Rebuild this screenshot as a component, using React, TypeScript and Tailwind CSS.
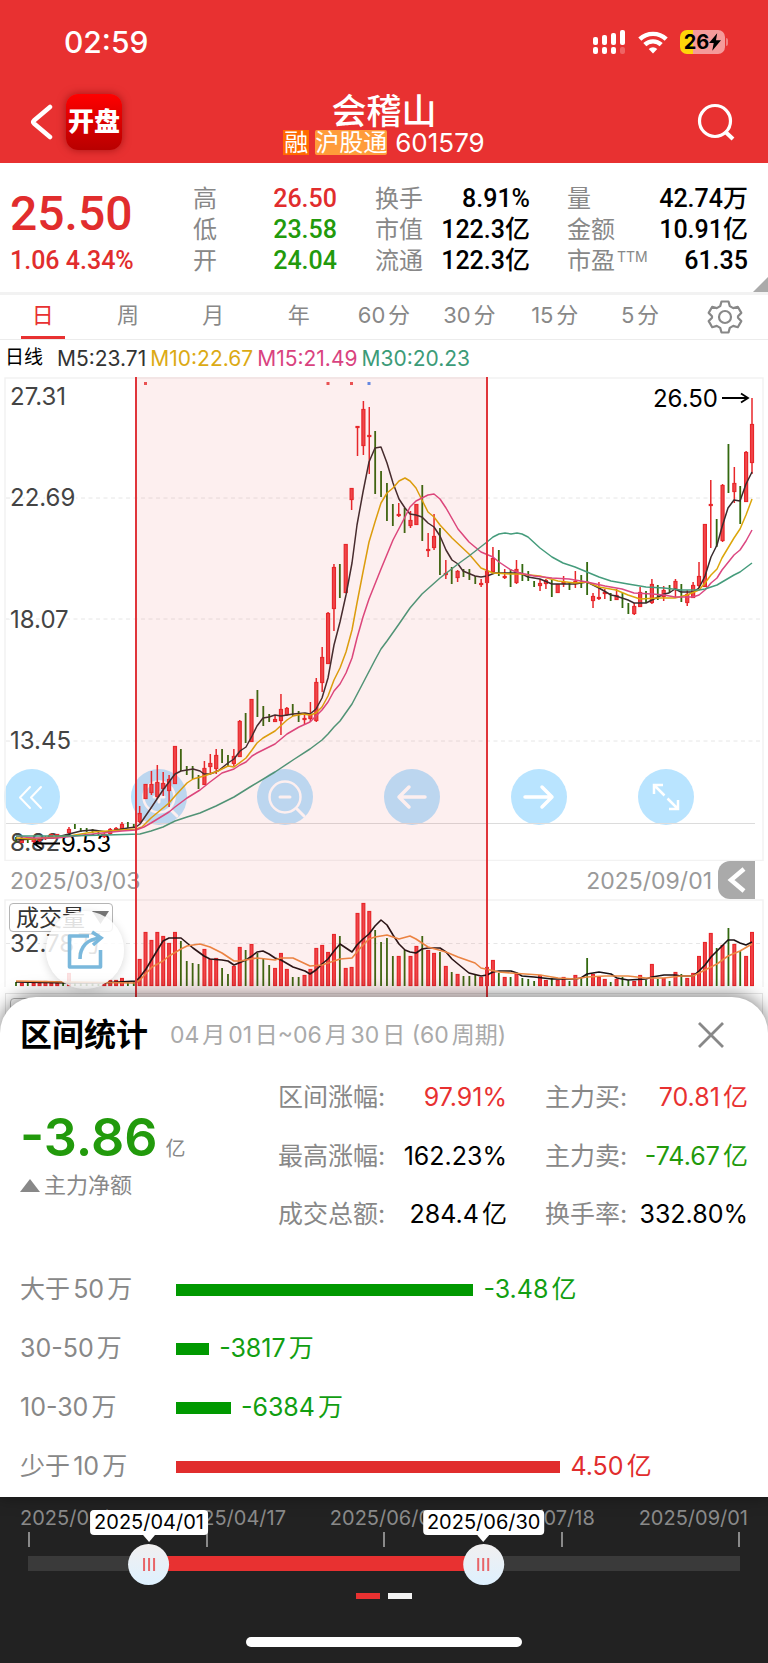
import type React from "react"
import { useState } from "react"

// high, low, volume, then body top and bottom for rising bars
type Bar = [number, number, number, number?, number?]

const bars: Bar[] = [
  [837, 842, 4], [840, 843, 3, 840, 843], [840, 843, 3], [838, 843, 3, 839, 842], [838, 842, 3, 839, 841],
  [836, 840, 5, 837, 839], [834, 837, 3, 834, 837], [834, 837, 3, 834, 836], [835, 838, 3], [827, 834, 13, 829, 833],
  [824, 829, 4], [828, 832, 3], [828, 832, 3], [829, 833, 3], [831, 835, 2],
  [833, 838, 3, 834, 837], [828, 835, 6, 829, 834], [827, 830, 6, 828, 830], [822, 830, 8, 824, 829], [822, 828, 4],
  [824, 828, 5], [806, 823, 27, 813, 822], [784, 799, 54, 784, 799], [771, 795, 46, 784, 793], [765, 799, 54, 782, 797],
  [772, 796, 50, 783, 789], [775, 807, 43, 779, 791], [746, 784, 54, 746, 784], [749, 771, 45], [766, 775, 25],
  [766, 779, 23], [775, 789, 22], [761, 785, 37, 768, 785], [754, 773, 27, 763, 767], [749, 774, 28, 755, 769],
  [749, 763, 18], [755, 766, 12], [749, 766, 20, 756, 764], [720, 757, 39, 721, 757], [713, 743, 36],
  [699, 742, 42, 699, 742], [690, 717, 33], [706, 726, 28], [714, 722, 21], [716, 722, 18, 719, 722],
  [694, 735, 33, 709, 721], [707, 716, 17, 708, 715], [704, 716, 9], [711, 722, 9], [715, 724, 11, 718, 720],
  [702, 722, 17, 714, 719], [678, 722, 38, 682, 721], [647, 692, 41, 657, 683], [612, 664, 34, 613, 664], [564, 631, 52, 567, 609],
  [564, 598, 50], [544, 593, 18, 544, 593], [488, 510, 19, 488, 500], [426, 456, 73, 426, 428], [401, 455, 83, 409, 446],
  [407, 474, 75, 435, 437], [431, 494, 56], [471, 497, 44], [483, 521, 48], [504, 526, 30],
  [503, 517, 30, 514, 516], [508, 533, 36], [511, 528, 30, 520, 526], [504, 525, 40, 504, 525], [485, 541, 50],
  [533, 557, 36, 549, 551], [514, 550, 33, 536, 548], [528, 575, 34], [560, 579, 20, 573, 575], [567, 584, 14],
  [570, 582, 12, 571, 578], [569, 577, 10], [569, 580, 10], [576, 584, 11], [579, 587, 9, 583, 585],
  [571, 583, 19, 571, 583], [547, 573, 26, 558, 572], [550, 576, 13], [569, 579, 9, 576, 578], [569, 587, 9],
  [560, 584, 12, 569, 583], [564, 581, 8], [571, 581, 7], [581, 587, 5], [579, 591, 11, 583, 586],
  [579, 589, 6, 580, 584], [580, 597, 8], [584, 593, 6, 584, 593], [576, 587, 9, 582, 584], [582, 590, 5],
  [571, 588, 11, 581, 584], [575, 588, 9], [562, 595, 28], [593, 608, 12, 596, 601], [582, 600, 9, 597, 599],
  [589, 599, 7, 592, 594], [593, 601, 4], [589, 600, 7, 595, 600], [593, 608, 9], [603, 614, 6],
  [603, 615, 5, 606, 614], [587, 607, 11, 592, 607], [591, 603, 6], [579, 604, 22, 584, 603], [585, 600, 7],
  [586, 601, 8, 590, 597], [585, 593, 5], [579, 598, 14, 581, 590], [584, 602, 12], [590, 606, 8, 594, 603],
  [582, 598, 13, 585, 598], [562, 588, 30, 576, 586], [524, 587, 44, 524, 587], [480, 548, 53, 504, 506], [519, 547, 38],
  [484, 542, 41, 485, 541], [444, 493, 58], [467, 503, 42, 483, 492], [486, 524, 35], [451, 502, 30, 452, 502],
  [398, 474, 54, 424, 463],
]

const m5 =
  "16,840 33,839 53,838 69,834 81,831 93,830 107,832 116,830 128,828 136,827 140,824 151,808 163,790 175,774 181,771 193,769 200,771 204,774 210,774 218,771 228,763 234,759 240,751 246,747 252,736 257,726 263,718 269,717 275,715 281,716 293,714 305,713 310,714 316,709 322,698 328,678 334,645 340,622 346,595 352,563 357,525 363,492 369,462 375,448 381,447 387,463 393,483 399,499 405,508 410,514 416,515 422,517 428,523 434,527 440,536 446,550 452,560 458,564 463,571 475,576 481,577 487,576 495,573 510,573 520,573 528,577 540,579 552,584 558,584 575,584 587,582 599,588 611,595 616,596 628,600 634,603 646,603 658,597 664,594 669,593 675,589 681,592 693,592 699,588 705,576 711,557 717,545 722,527 728,508 734,500 740,501 746,484 752,472"
const m10 =
  "16,838 33,839 69,836 93,832 122,830 136,829 142,827 151,818 169,803 175,796 187,783 193,779 204,776 218,771 228,766 234,767 246,758 252,750 257,743 263,738 275,731 287,720 293,716 303,714 310,715 316,713 322,707 328,696 334,680 340,668 346,652 352,630 357,603 363,572 369,542 375,522 381,503 387,493 393,488 399,481 405,478 410,481 416,488 422,500 428,512 434,517 440,525 452,538 469,554 481,568 493,573 510,574 520,574 540,576 558,581 575,583 587,582 599,587 616,590 628,595 640,599 658,598 675,598 687,595 699,590 705,583 711,575 717,569 722,558 734,538 740,529 746,515 752,499"
const m15 =
  "16,836 33,838 57,838 93,834 122,831 136,830 144,827 151,823 169,812 175,807 187,798 200,790 210,782 222,773 234,769 240,765 246,762 252,756 257,753 263,750 275,744 287,734 299,727 310,722 316,716 322,710 328,702 334,691 340,684 346,673 352,658 357,638 363,617 369,599 381,569 393,540 405,517 410,507 416,501 428,495 434,494 440,499 446,508 458,529 469,542 481,552 493,557 499,562 511,570 520,573 534,576 552,578 569,579 587,582 605,586 622,589 634,593 652,594 664,595 675,597 693,597 699,595 705,590 711,583 717,578 722,570 734,555 740,550 746,541 752,530"
const m30 =
  "16,836 67,836 107,835 140,834 151,831 163,827 169,824 175,821 187,817 200,813 216,806 234,797 250,787 275,772 293,760 310,749 322,740 328,734 334,727 340,721 352,704 363,683 375,660 381,649 387,641 399,624 410,608 422,594 440,578 458,564 469,556 487,542 493,537 499,534 505,533 511,534 517,533 522,534 528,537 540,548 552,557 563,563 575,567 587,572 599,577 611,581 628,584 646,587 664,588 681,590 699,590 705,589 717,585 734,575 740,572 752,563"
const vol5 =
  "16,982 69,983 100,983 136,981 140,977 146,969 152,959 163,941 169,938 181,938 187,943 193,948 204,956 210,959 222,960 228,961 234,965 246,960 252,956 257,952 263,951 269,954 275,958 281,960 293,967 305,971 310,974 316,970 322,964 328,959 334,951 340,944 346,948 352,952 357,945 363,939 369,934 375,926 381,920 387,925 393,935 399,944 405,950 410,952 416,953 422,949 428,948 440,948 446,952 452,959 458,964 469,973 481,976 487,975 493,972 499,971 511,971 517,973 522,976 534,977 552,979 575,979 581,978 587,974 599,972 611,974 617,978 628,980 646,979 652,977 664,975 675,975 681,976 693,976 699,971 705,965 711,957 717,951 722,946 728,940 734,940 740,943 746,945 752,942"
const vol10 =
  "16,981 69,982 136,983 140,980 152,967 163,961 169,956 181,949 187,946 193,945 200,944 210,947 222,953 234,961 240,961 257,958 275,960 281,958 293,958 310,966 322,965 340,959 352,958 357,952 363,945 369,939 375,937 387,935 393,937 399,939 410,936 416,939 428,947 446,952 458,957 475,963 481,968 499,972 511,973 540,975 558,978 575,979 587,977 605,976 628,976 646,978 664,978 681,976 693,976 705,970 717,964 728,956 740,951 752,944"

const tabs = ["日", "周", "月", "年", "60分", "30分", "15分", "5分"]

const barX = (i: number) => 16 + i * 5.888

function StatusBar() {
  return (
    <div className="flex h-20 items-center justify-between pr-10 pl-16 pt-1">
      <span className="text-[30px] font-medium">02:59</span>
      <div className="flex items-center gap-3">
        <svg width="33" height="25" viewBox="0 0 33 25" fill="white">
          <rect x="0" y="7" width="5" height="8" rx="2" />
          <rect x="9" y="5" width="5" height="10" rx="2" />
          <rect x="18" y="3" width="5" height="12" rx="2" />
          <rect x="27" y="0" width="5" height="15" rx="2" />
          <rect x="0" y="17" width="5" height="7" rx="2" />
          <rect x="9" y="17" width="5" height="7" rx="2" />
          <rect x="18" y="17" width="5" height="7" rx="2" />
          <rect x="27" y="17" width="5" height="7" rx="2" opacity="0.25" />
        </svg>
        <svg width="30" height="23" viewBox="0 0 30 23" fill="none" stroke="white" strokeWidth="4.4">
          <path d="M1.8 8.2a19 19 0 0 1 26.4 0" />
          <path d="M6.8 13.6a12 12 0 0 1 16.4 0" />
          <path d="M15 22.5 10.7 18a6.5 6.5 0 0 1 8.6 0z" fill="white" stroke="none" />
        </svg>
        <div className="flex items-center gap-px">
          <div className="flex h-6 w-[45px] items-center justify-center rounded-[7px] bg-[linear-gradient(90deg,#ffd60a_28%,#f59a9a_28%)] text-black">
            <span className="text-[20px] font-bold">26</span>
            <svg width="12" height="18" viewBox="0 0 11 16">
              <path d="M7.5 0 0 9h4.3L3 16l8-9.6H6.4z" fill="black" />
            </svg>
          </div>
          <div className="h-2 w-0.5 rounded-r bg-[#f08080]" />
        </div>
      </div>
    </div>
  )
}

function NavBar() {
  return (
    <div className="grid h-[83px] grid-cols-[1fr_auto_1fr] items-center">
      <div className="flex items-center gap-3 pl-7">
        <button type="button" aria-label="返回">
          <svg width="26" height="36" viewBox="0 0 26 36" fill="none" stroke="white" strokeWidth="4.5" strokeLinecap="round" strokeLinejoin="round">
            <path d="M22 3 6 16.500q-1.500 1.500 0 3L22 33" />
          </svg>
        </button>
        <div className="flex size-14 items-center justify-center rounded-xl bg-linear-to-b from-[#ff0000] to-[#b80000] text-[26px] font-black shadow-[0_0_8px_rgba(120,0,0,0.6)]">
          开盘
        </div>
      </div>
      <div className="flex flex-col items-center pt-1">
        <h1 className="text-[35px] leading-[38px] font-medium">会稽山</h1>
        <div className="flex items-center gap-1.5 text-2xl leading-[25px]">
          <span className="bg-[#ff6a00] px-px">融</span>
          <span className="rounded-xs bg-[#ff9c3a]">沪股通</span>
          <span className="ml-0.5 text-[26px]">601579</span>
        </div>
      </div>
      <button type="button" aria-label="搜索" className="mr-8 justify-self-end">
        <svg width="40" height="38" viewBox="0 0 40 38" fill="none" stroke="white" strokeWidth="3.2">
          <circle cx="19" cy="18" r="15.500" />
          <path d="M29 28.500 37 36" strokeWidth="4" />
        </svg>
      </button>
    </div>
  )
}

function QuoteItem({ label, value, color = "text-black" }: { label: React.ReactNode; value: string; color?: string }) {
  return (
    <div className="flex h-[31px] items-center justify-between whitespace-nowrap">
      <dt className="text-2xl text-[#888]">{label}</dt>
      <dd className={`font-['Roboto','Noto_Sans_CJK_SC',sans-serif] text-[25px] font-medium ${color}`}>{value}</dd>
    </div>
  )
}

function Quote() {
  return (
    <section className="relative grid h-[129px] grid-cols-[183fr_154fr_38fr_155fr_37fr_181fr_20fr] pt-5 [text-autospace:no-autospace]">
      <div className="pl-2.5 font-['Roboto',sans-serif] font-medium text-[#e12d2d]">
        <div className="text-5xl leading-[62px]">25.50</div>
        <div className="text-[25px] leading-[31px] whitespace-nowrap">1.06 4.34%</div>
      </div>
      <dl className="col-start-2 pl-2.5">
        <QuoteItem label="高" value="26.50" color="text-[#e12d2d]" />
        <QuoteItem label="低" value="23.58" color="text-[#229a0c]" />
        <QuoteItem label="开" value="24.04" color="text-[#229a0c]" />
      </dl>
      <dl className="col-start-4">
        <QuoteItem label="换手" value="8.91%" />
        <QuoteItem label="市值" value="122.3亿" />
        <QuoteItem label="流通" value="122.3亿" />
      </dl>
      <dl className="col-start-6">
        <QuoteItem label="量" value="42.74万" />
        <QuoteItem label="金额" value="10.91亿" />
        <QuoteItem label={<>市盈<sup className="ml-0.5 text-sm">TTM</sup></>} value="61.35" />
      </dl>
      <svg className="absolute right-0 bottom-0" width="15" height="15">
        <path d="M15 0v15H0z" fill="#aaa" />
      </svg>
    </section>
  )
}

function PeriodTabs() {
  const [active, setActive] = useState("日")
  return (
    <nav className="grid h-12 grid-cols-9 border-t-[3px] border-b border-t-[#f2f2f2] border-b-[#ececec] text-[22px]">
      {tabs.map((t) => (
        <button
          type="button"
          key={t}
          onClick={() => setActive(t)}
          className={`flex flex-col items-center justify-between pt-1 ${t === active ? "text-[#e83131]" : "text-[#888]"}`}
        >
          <span className="leading-8">{t}</span>
          <span className={`h-[3px] w-11 ${t === active ? "bg-[#e83131]" : ""}`} />
        </button>
      ))}
      <button type="button" aria-label="设置" className="flex items-center justify-center">
        <svg width="36" height="36" viewBox="0 0 36 36" fill="none" stroke="#888" strokeWidth="2.2" strokeLinejoin="round">
          <path d="M14.500 2.500h7l1.300 4.600 3.400 2 4.600-1.300 3.500 6.100-3.300 3.300v1.600l3.300 3.300-3.500 6.100-4.600-1.300-3.400 2-1.300 4.600h-7l-1.300-4.600-3.400-2-4.600 1.300-3.500-6.100L5 18.800v-1.600l-3.300-3.300 3.500-6.100 4.600 1.300 3.400-2z" />
          <circle cx="18" cy="18" r="6" />
        </svg>
      </button>
    </nav>
  )
}

function ToolButton({ label, children }: { label: string; children: React.ReactNode }) {
  return (
    <button type="button" aria-label={label} className="flex size-14 items-center justify-center rounded-full bg-[#b9e4ff]">
      <svg width="44" height="44" viewBox="0 0 44 44" fill="none" stroke="white" strokeWidth="3" strokeLinecap="round" strokeLinejoin="round">
        {children}
      </svg>
    </button>
  )
}

function PriceChart() {
  return (
    <div className="relative">
      <div className="absolute top-[81%] right-[9.7%] left-[0.5%] flex justify-between">
        <ToolButton label="最早">
          <path d="M20 12 10 22.500 20 33M31 12 21 22.500 31 33" strokeWidth="2" />
        </ToolButton>
        <ToolButton label="放大">
          <circle cx="22" cy="22" r="15.500" strokeWidth="2.500" />
          <path d="M17 22h10M22 17v10M33 34l7 7" />
        </ToolButton>
        <ToolButton label="缩小">
          <circle cx="22" cy="22" r="15.500" strokeWidth="2.500" />
          <path d="M17 22h10M34 34l7 7" />
        </ToolButton>
        <ToolButton label="左移">
          <path d="M35 22H9M19 12 9 22l10 10" strokeWidth="3.500" />
        </ToolButton>
        <ToolButton label="右移">
          <path d="M8 22h27M25 12l10 10-10 10" strokeWidth="3.500" />
        </ToolButton>
        <ToolButton label="全屏">
          <path d="M19 10h-9v9M10 10l10.500 10.500M25 34h9v-9M34 34 23.500 23.500" strokeWidth="2.500" strokeLinecap="butt" strokeLinejoin="miter" />
        </ToolButton>
      </div>
      <svg className="pointer-events-none relative block w-full" viewBox="0 377 768 484" fontSize="24">
        <rect x="5" y="378" width="758" height="482.500" fill="none" stroke="#f2f2f2" strokeWidth="1.500" />
        <g stroke="#e6e6e6" strokeDasharray="4 3.500">
          <path d="M6 498h757M6 619h757M6 741h757" />
        </g>
        <path d="M6 823.500h749" stroke="#dcdcdc" />
        <g fill="#444" stroke="white" strokeWidth="4" paintOrder="stroke">
          <text x="10" y="405">27.31</text>
          <text x="10" y="506">22.69</text>
          <text x="10" y="628">18.07</text>
          <text x="10" y="749">13.45</text>
        </g>
        <text x="10" y="851" fill="#444">8.82</text>
        <text x="61" y="852">9.53</text>
        <path d="M60 843.500H34M42 838l-8 5.500 8 5.500M722 398h25M741 393.500l7 4.500-7 4.500" fill="none" stroke="black" strokeWidth="1.800" />
        <text x="718" y="407" textAnchor="end">26.50</text>
        {bars.map(([high, low, , top, bottom], i) =>
          top === undefined || bottom === undefined ? (
            <rect key={i} x={barX(i) - 0.9} y={high} width="1.800" height={low - high} fill="#33690f" />
          ) : (
            <g key={i} stroke="#e8262a">
              <path d={`M${barX(i)} ${high}V${low}`} strokeWidth="1.500" />
              <rect x={barX(i) - 1.5} y={top + 0.5} width="3" height={Math.max(bottom - top - 1, 1)} fill="#f0484c" strokeWidth="1.200" />
            </g>
          ),
        )}
        <g fill="none" strokeWidth="1.500" strokeLinejoin="round">
          <polyline points={m5} stroke="#3a2c2e" />
          <polyline points={m10} stroke="#dca60a" />
          <polyline points={m15} stroke="#dc4882" />
          <polyline points={m30} stroke="#459c7c" />
        </g>
        <g fill="#ea5455">
          <rect x="144" y="382" width="3" height="3" />
          <rect x="326.500" y="382" width="3" height="3" />
          <rect x="350" y="382" width="3" height="3" />
          <rect x="367.500" y="382" width="3" height="3" fill="#5b8ff0" />
        </g>
      </svg>
    </div>
  )
}

function VolumeChart() {
  return (
    <div className="relative">
      <svg className="block w-full" viewBox="0 899 768 88" fontSize="24">
        <path d="M5 987V900h758v87" fill="none" stroke="#f2f2f2" strokeWidth="1.500" />
        <path d="M6 943.500h757" stroke="#e6e6e6" strokeDasharray="4 3.500" />
        <text x="10" y="952" fill="#444" stroke="white" strokeWidth="4" paintOrder="stroke">32.78万</text>
        {bars.map(([, , volume, top], i) =>
          top === undefined ? (
            <rect key={i} x={barX(i) - 0.9} y={986 - volume} width="1.800" height={volume} fill="#33690f" />
          ) : (
            <rect key={i} x={barX(i) - 1.4} y={986.5 - volume} width="2.800" height={volume - 1} fill="#f0484c" stroke="#e8262a" strokeWidth="1.200" />
          ),
        )}
        <g fill="none" strokeWidth="1.600" strokeLinejoin="round">
          <polyline points={vol5} stroke="#1c1214" />
          <polyline points={vol10} stroke="#ec8a44" />
        </g>
      </svg>
      <div className="absolute top-1 left-[9px] flex items-center">
        <select aria-label="指标" className="h-[29px] w-[104px] appearance-none rounded-sm border border-[#b5b5b5] bg-white pl-1.5 text-[23px] leading-6 text-[#333]">
          <option>成交量</option>
        </select>
        <svg className="pointer-events-none absolute right-1" width="17" height="13">
          <path d="M0 0h17L8.500 13z" fill="#777" />
        </svg>
      </div>
      <button type="button" aria-label="分享" className="absolute top-3 left-[46px] flex size-[78px] items-center justify-center rounded-full bg-white/85 shadow-[0_2px_10px_rgba(0,0,0,0.15)]">
        <svg width="40" height="40" viewBox="0 0 40 40" fill="none" stroke="#7ab8dc" strokeWidth="3.600">
          <path d="M24 6H4.500v31h31V20" strokeLinejoin="round" />
          <path d="M15 29C15 17 22 9 36 8" />
          <path d="M27 2 36 8 28 15" />
        </svg>
      </button>
    </div>
  )
}

function ChartArea() {
  return (
    <section className="relative overflow-hidden">
      <PriceChart />
      <div className="flex h-[38px] items-center justify-between pr-[13px] pl-2.5 text-[23px] text-[#999]">
        <span className="pt-0.5">2025/03/03</span>
        <div className="flex items-center gap-1.5">
          <span className="pt-0.5">2025/09/01</span>
          <button type="button" aria-label="展开" className="flex h-[38px] w-[37px] items-center justify-center rounded-l-xl bg-[#aaa]">
            <svg width="20" height="26" viewBox="0 0 20 26" fill="none" stroke="white" strokeWidth="4.500">
              <path d="M17 2 4 13l13 11" />
            </svg>
          </button>
        </div>
      </div>
      <VolumeChart />
      <div className="mx-[5px] mt-1.5 h-12 border border-[#e6e6e6] pt-1 pl-1">
        <div className="h-8 w-[104px] rounded-sm border border-[#b5b5b5]" />
      </div>
      <div className="pointer-events-none absolute inset-y-0 left-[17.6%] w-[45.9%] border-x-2 border-[#e0353a] bg-[#e52e2e]/8" />
    </section>
  )
}

function Stat({ label, value, color = "text-black" }: { label: string; value: string; color?: string }) {
  return (
    <div className="flex items-center justify-between whitespace-nowrap">
      <dt className="text-[#888]">{label}:</dt>
      <dd className={color}>{value}</dd>
    </div>
  )
}

function FlowRow({ label, value, width, up }: { label: string; value: string; width: number; up?: boolean }) {
  return (
    <div className="flex h-[59px] items-center text-[25px]">
      <span className="w-[156px] shrink-0 text-[#888]">{label}</span>
      <div className="flex flex-1 items-center gap-2.5 whitespace-nowrap">
        <div className={`h-3 ${up ? "bg-[#e12d2d]" : "bg-[#009900]"}`} style={{ width: `${width}%` }} />
        <span className={up ? "text-[#e12d2d]" : "text-[#119e11]"}>{value}</span>
      </div>
    </div>
  )
}

function RangeSheet() {
  return (
    <section className="relative -mt-11 rounded-t-[36px] bg-white px-5 shadow-[0_-2px_18px_rgba(0,0,0,0.5)]">
      <div className="flex h-[72px] items-center justify-between pt-1">
        <div className="flex items-center gap-[22px]">
          <h2 className="text-[32px] font-bold">区间统计</h2>
          <span className="text-[23px] text-[#aaa]">04月01日~06月30日 (60周期)</span>
        </div>
        <button type="button" aria-label="关闭" className="mr-6">
          <svg width="26" height="26" viewBox="0 0 26 26" fill="none" stroke="#888" strokeWidth="2.800">
            <path d="M1 1l24 24M25 1 1 25" />
          </svg>
        </button>
      </div>
      <div className="flex">
        <div className="w-[258px] shrink-0 pt-9">
          <div className="flex items-baseline gap-2 leading-[66px]">
            <span className="text-[52px] font-semibold text-[#229a0c]">-3.86</span>
            <span className="text-xl text-[#888]">亿</span>
          </div>
          <div className="flex items-center gap-1 text-[22px] leading-7 text-[#888]">
            <svg width="20" height="13">
              <path d="M10 0l10 13H0z" fill="#888" />
            </svg>
            主力净额
          </div>
        </div>
        <dl className="grid h-[175px] flex-1 grid-cols-[229fr_203fr] gap-x-[38px] text-[25px]">
          <Stat label="区间涨幅" value="97.91%" color="text-[#e83131]" />
          <Stat label="主力买" value="70.81亿" color="text-[#e83131]" />
          <Stat label="最高涨幅" value="162.23%" />
          <Stat label="主力卖" value="-74.67亿" color="text-[#229a0c]" />
          <Stat label="成交总额" value="284.4亿" />
          <Stat label="换手率" value="332.80%" />
        </dl>
      </div>
      <div className="pt-4 pb-px">
        <FlowRow label="大于50万" value="-3.48亿" width={52} />
        <FlowRow label="30-50万" value="-3817万" width={5.8} />
        <FlowRow label="10-30万" value="-6384万" width={9.6} />
        <FlowRow label="少于10万" value="4.50亿" width={67.2} up />
      </div>
    </section>
  )
}

function Handle({ date, at }: { date: string; at: number }) {
  return (
    <div className="pointer-events-none absolute bottom-1/2 flex -translate-x-1/2 translate-y-[21px] flex-col items-center" style={{ left: `${at}%` }}>
      <span className="rounded-sm bg-white px-1 text-[20px] leading-[25px] text-black">{date}</span>
      <svg width="12" height="7">
        <path d="M0 0h12L6 7z" fill="white" />
      </svg>
      <span className="mt-0.5 flex size-[41px] items-center justify-center gap-[3px] rounded-full bg-linear-to-b from-[#f1efef] to-[#def1ff]">
        <span className="h-[13px] w-0.5 bg-[#e86468]" />
        <span className="h-[13px] w-0.5 bg-[#e86468]" />
        <span className="h-[13px] w-0.5 bg-[#e86468]" />
      </span>
    </div>
  )
}

function RangeSlider() {
  return (
    <footer className="bg-[#222] pt-2 pb-4">
      <div className="flex justify-between px-5 text-[20px] leading-[26px] text-[#8a8a8a]">
        <span>2025/03/03</span>
        <span>2025/04/17</span>
        <span>2025/06/05</span>
        <span>2025/07/18</span>
        <span>2025/09/01</span>
      </div>
      <div className="mx-7 flex h-[25px] justify-between pt-px">
        {[0, 1, 2, 3, 4].map((n) => (
          <span key={n} className="h-[15px] w-0.5 bg-[#8a8a8a]" />
        ))}
      </div>
      <div className="relative mx-7 h-[15px] bg-[#3a3a3a]">
        <div className="absolute inset-y-0 left-[17%] w-[47%] bg-[#e83131]" />
        <Handle date="2025/04/01" at={17} />
        <Handle date="2025/06/30" at={64} />
        <input type="range" aria-label="开始日期" defaultValue={17} className="absolute inset-y-0 left-0 w-2/5 opacity-0" max={40} />
        <input type="range" aria-label="结束日期" defaultValue={64} className="absolute inset-y-0 right-0 w-3/5 opacity-0" min={40} />
      </div>
      <div className="mt-[22px] flex justify-center gap-2">
        <span className="h-1.5 w-6 bg-[#e83131]" />
        <span className="h-1.5 w-6 bg-[#f3f3f3]" />
      </div>
      <div className="mx-auto mt-[38px] h-2.5 w-[36%] rounded-full bg-white" />
    </footer>
  )
}

export default function App() {
  return (
    <div className="bg-white font-['Inter','Noto_Sans_CJK_SC',sans-serif] text-black [text-autospace:normal]">
      <header className="bg-[#e83131] text-white">
        <StatusBar />
        <NavBar />
      </header>
      <Quote />
      <PeriodTabs />
      <div className="flex h-[37px] items-center gap-1 pl-[5px] text-[21px] whitespace-nowrap">
        <span className="mr-2.5 text-[19px]">日线</span>
        <span className="text-[#333]">M5:23.71</span>
        <span className="text-[#dcaa14]">M10:22.67</span>
        <span className="text-[#d9437f]">M15:21.49</span>
        <span className="text-[#3c9b78]">M30:20.23</span>
      </div>
      <ChartArea />
      <RangeSheet />
      <RangeSlider />
    </div>
  )
}
